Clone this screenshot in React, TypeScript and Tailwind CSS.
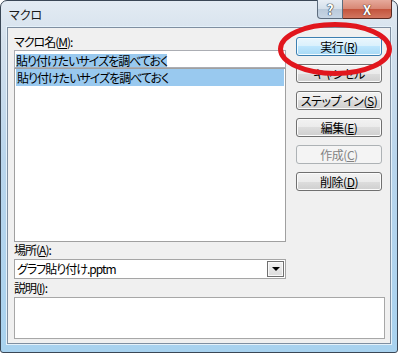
import React from 'react';

const font = "font-['Noto_Sans_CJK_JP',_'Noto_Sans',_sans-serif] [font-feature-settings:'palt']";

const btnBase =
  'h-[19px] w-[86px] rounded-[3px] border text-[12px] leading-[17px] tracking-[-0.5px] text-center whitespace-nowrap select-none';
const btnNormal =
  'border-[#707070] text-black bg-[linear-gradient(to_bottom,#f2f2f2_0%,#ebebeb_50%,#dddddd_50%,#cfcfcf_100%)] shadow-[inset_0_0_0_1px_#fbfbfb]';
const btnDefault =
  'border-[#3c7fb1] text-black bg-[linear-gradient(to_bottom,#eaf6fd_0%,#d9f0fc_50%,#bee6fd_50%,#a7d9f5_100%)] shadow-[inset_0_0_0_1px_#f3fbff]';
const btnDisabled = 'border-[#adb2b5] text-[#838383] bg-[#f4f4f4]';

const Label: React.FC<{ text: string; acc: string; className?: string }> = ({ text, acc, className }) => (
  <div className={`h-[14px] text-[12px] leading-[14px] tracking-[-1px] text-black whitespace-nowrap ${className ?? ''}`}>
    {text}(<u>{acc}</u>):
  </div>
);

export default function App() {
  const buttons = [
    { label: '実行', acc: 'R', kind: 'default' },
    { label: 'キャンセル', acc: '', kind: 'normal' },
    { label: 'ステップ イン', acc: 'S', kind: 'normal' },
    { label: '編集', acc: 'E', kind: 'normal' },
    { label: '作成', acc: 'C', kind: 'disabled' },
    { label: '削除', acc: 'D', kind: 'normal' },
  ];

  return (
    <div className={`relative w-[398px] h-[353px] overflow-hidden bg-white ${font}`}>
      <div className="flex flex-col w-[398px] h-[353px] rounded-t-[7px] rounded-b-[3px] border border-[#3a4756] bg-[linear-gradient(to_bottom,#e3ebf3_0%,#d3e0ec_12%,#b9d5ec_45%,#a8d2ef_100%)]">
        {/* title bar */}
        <div className="flex h-[26px] items-start">
          <div className="pl-[8px] pt-[7px] text-[12px] leading-[14px] text-[#1a1a1a]">マクロ</div>
          <div className="ml-auto mr-[5px] -mt-px flex">
            <div className="flex h-[19px] w-[26px] items-center justify-center rounded-bl-[4px] border border-t-0 border-[#5d6c7d] bg-[linear-gradient(to_bottom,#e8eef5_0%,#d4dfea_50%,#b9c9da_50%,#c7d6e5_100%)] text-[14px] font-bold leading-none text-white [text-shadow:0_0_1px_#1e2a38,0_0_1px_#1e2a38,0_0_1px_#1e2a38]">
              ?
            </div>
            <div className="flex h-[19px] w-[49px] items-center justify-center rounded-br-[4px] border border-l-0 border-t-0 border-[#5a2a22] bg-[linear-gradient(to_bottom,#e6aa9c_0%,#d78673_50%,#c3533c_50%,#d27660_100%)] text-[13px] font-bold leading-none text-white [text-shadow:0_0_1px_#3b1710,0_0_1px_#3b1710]">
              X
            </div>
          </div>
        </div>

        {/* client area */}
        <div className="mx-[6px] h-[317px] border border-[#7f8fa1] shadow-[0_0_0_1px_#e4f1fa]">
          <div className="h-full bg-[#f0f0f0] px-[6px] pt-[7px]">
            <div className="flex">
              <div className="w-[272px]">
                <Label text="マクロ名" acc="M" />
                <div className="mt-[1px] h-[18px] overflow-hidden border border-[#abadb3] bg-white px-[1px] pt-[2px] leading-[13px]">
                  <span className="inline-block h-[13px] bg-[#99c9ef] text-[12px] leading-[13px] tracking-[-1px] text-black whitespace-nowrap">
                    貼り付けたいサイズを調べておく
                  </span>
                </div>
                <div className="h-[174px] border border-[#a0a0a0] bg-white p-[1px] pt-0">
                  <div className="h-[17px] bg-[#99c9ef] pl-[1px] text-[12px] leading-[17px] tracking-[-1px] text-black whitespace-nowrap">
                    貼り付けたいサイズを調べておく
                  </div>
                </div>
                <Label text="場所" acc="A" className="mt-[1px]" />
                <div className="mt-[2px] flex h-[20px] items-center border border-[#a5a5a5] bg-white pl-[2px] pr-[1px]">
                  <span className="text-[12px] leading-[14px] tracking-[-1px] text-black">グラフ貼り付け.pptm</span>
                  <div className="ml-auto flex h-[16px] w-[17px] items-center justify-center border border-[#707070] bg-[linear-gradient(to_bottom,#f2f2f2,#dcdcdc)] shadow-[inset_0_0_0_1px_#fafafa]">
                    <div className="h-0 w-0 border-x-[4px] border-t-[4px] border-x-transparent border-t-black" />
                  </div>
                </div>
              </div>
              <div className="ml-[10px] mt-[2px] flex flex-col gap-[8px]">
                {buttons.map((b) => (
                  <div
                    key={b.label}
                    className={`${btnBase} ${
                      b.kind === 'default' ? btnDefault : b.kind === 'disabled' ? btnDisabled : btnNormal
                    }`}
                  >
                    {b.label}
                    {b.acc && (
                      <>
                        (<u>{b.acc}</u>)
                      </>
                    )}
                  </div>
                ))}
              </div>
            </div>
            <Label text="説明" acc="I" className="mt-[2px]" />
            <div className="mt-[2px] h-[42px] w-[371px] border border-[#a7a7a7] bg-white" />
          </div>
        </div>
      </div>

      {/* red highlight ring drawn over the dialog */}
      <svg className="pointer-events-none absolute left-0 top-0" width="398" height="353">
        <ellipse cx="335" cy="49" rx="54.5" ry="24.5" fill="none" stroke="#e1161d" strokeWidth="5" />
      </svg>
    </div>
  );
}
